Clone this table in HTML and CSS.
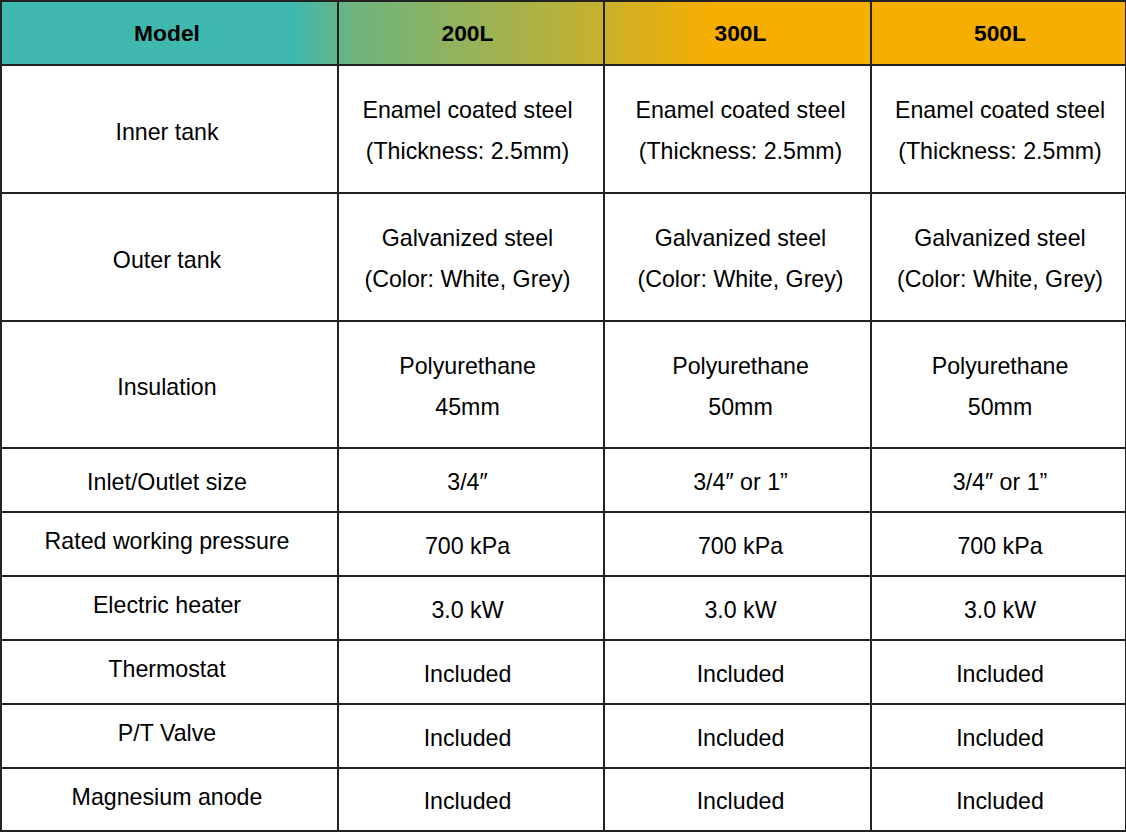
FILE: index.html
```html
<!DOCTYPE html>
<html>
<head>
<meta charset="utf-8">
<link rel="stylesheet" href="styles.css">
</head>
<body>
<table class="spec">
  <colgroup>
    <col class="c1"><col class="c2"><col class="c3"><col class="c4">
  </colgroup>
  <thead>
    <tr class="head">
      <th>Model</th><th>200L</th><th>300L</th><th>500L</th>
    </tr>
  </thead>
  <tbody>
    <tr class="tall">
      <td>Inner tank</td>
      <td>Enamel coated steel<br>(Thickness: 2.5mm)</td>
      <td>Enamel coated steel<br>(Thickness: 2.5mm)</td>
      <td>Enamel coated steel<br>(Thickness: 2.5mm)</td>
    </tr>
    <tr class="tall">
      <td>Outer tank</td>
      <td>Galvanized steel<br>(Color: White, Grey)</td>
      <td>Galvanized steel<br>(Color: White, Grey)</td>
      <td>Galvanized steel<br>(Color: White, Grey)</td>
    </tr>
    <tr class="tall shorter">
      <td>Insulation</td>
      <td>Polyurethane<br>45mm</td>
      <td>Polyurethane<br>50mm</td>
      <td>Polyurethane<br>50mm</td>
    </tr>
    <tr class="short">
      <td>Inlet/Outlet size</td>
      <td>3/4″</td>
      <td>3/4″ or 1”</td>
      <td>3/4″ or 1”</td>
    </tr>
    <tr class="short raised">
      <td>Rated working pressure</td>
      <td>700 kPa</td>
      <td>700 kPa</td>
      <td>700 kPa</td>
    </tr>
    <tr class="short raised">
      <td>Electric heater</td>
      <td>3.0 kW</td>
      <td>3.0 kW</td>
      <td>3.0 kW</td>
    </tr>
    <tr class="short raised">
      <td>Thermostat</td>
      <td>Included</td>
      <td>Included</td>
      <td>Included</td>
    </tr>
    <tr class="short raised">
      <td>P/T Valve</td>
      <td>Included</td>
      <td>Included</td>
      <td>Included</td>
    </tr>
    <tr class="last raised">
      <td>Magnesium anode</td>
      <td>Included</td>
      <td>Included</td>
      <td>Included</td>
    </tr>
  </tbody>
</table>
</body>
</html>
```
FILE: styles.css
```css
html, body {
  margin: 0;
  padding: 0;
  background: #ffffff;
}

.spec {
  border-collapse: collapse;
  table-layout: fixed;
  width: 1125px;
  margin: 0;
  font-family: "Liberation Sans", Arial, sans-serif;
  font-size: 23.2px;
  color: #000;
}

.c1 { width: 337px; }
.c2 { width: 266px; }
.c3 { width: 267px; }
.c4 { width: 255px; }

.spec th,
.spec td {
  border: 2px solid #222222;
  text-align: center;
  vertical-align: middle;
  padding: 4px 0 0 0;
  line-height: 41px;
}

.spec th:nth-child(1),
.spec td:nth-child(1) { padding-right: 5px; }
.spec th:nth-child(2),
.spec td:nth-child(2) { padding-right: 7px; }
.spec th:nth-child(3),
.spec td:nth-child(3) { padding-left: 6px; }
.spec th:nth-child(4),
.spec td:nth-child(4) { padding-left: 3px; }

.head {
  height: 64px;
  background: linear-gradient(90deg, #3fb8af 0%, #3fb8af 26%, #6cb47f 31%, #b8b13c 50%, #f6ae00 63%, #f6ae00 100%);
}

.head th {
  font-weight: bold;
  font-size: 22.8px;
  padding-top: 0;
}

.tall { height: 128px; }
.tall.shorter { height: 127px; }
.short { height: 64px; }
.last { height: 63px; }

.tall td:first-child {
  padding-top: 6px;
}

.raised td:first-child {
  padding-bottom: 9px;
}
```
